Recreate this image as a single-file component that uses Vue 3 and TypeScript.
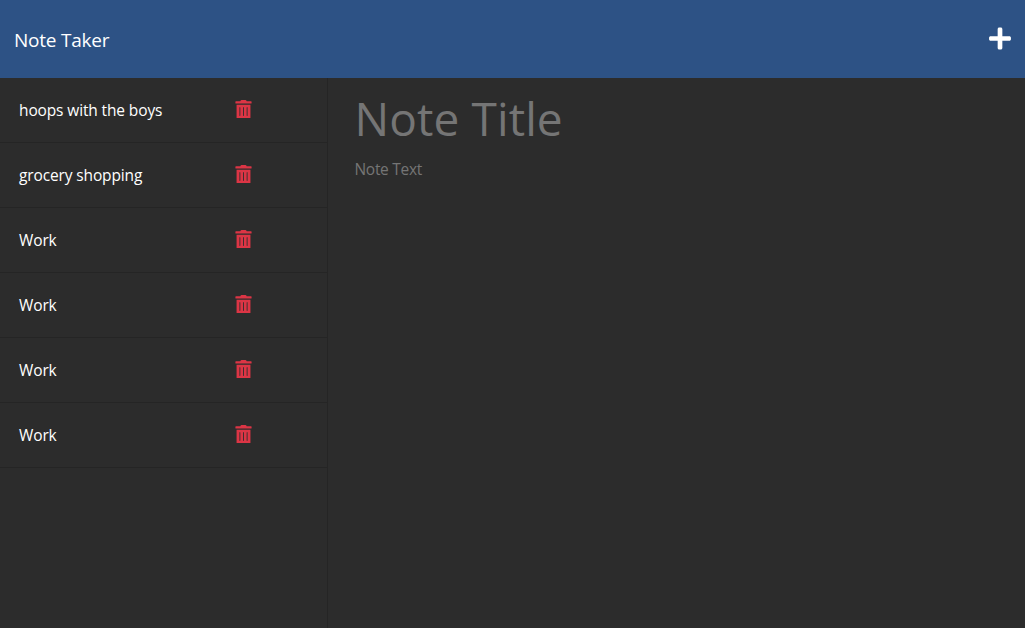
<script setup lang="ts">
import { ref } from 'vue'

interface Note {
  id: number
  title: string
}

const notes = ref<Note[]>([
  { id: 1, title: 'hoops with the boys' },
  { id: 2, title: 'grocery shopping' },
  { id: 3, title: 'Work' },
  { id: 4, title: 'Work' },
  { id: 5, title: 'Work' },
  { id: 6, title: 'Work' },
])
const noteTitle = ref('')
const noteText = ref('')

function removeNote(id: number) {
  notes.value = notes.value.filter((note) => note.id !== id)
}

function newNote() {
  noteTitle.value = ''
  noteText.value = ''
}
</script>

<template>
  <div class="app">
    <header class="navbar">
      <span class="brand">Note Taker</span>
      <button class="icon-button" aria-label="New note" @click="newNote">
        <svg class="plus" viewBox="0 0 448 512" fill="currentColor">
          <path d="M416 208H272V64c0-17.67-14.33-32-32-32h-32c-17.67 0-32 14.33-32 32v144H32c-17.67 0-32 14.33-32 32v32c0 17.67 14.33 32 32 32h144v144c0 17.67 14.33 32 32 32h32c17.67 0 32-14.33 32-32V304h144c17.67 0 32-14.33 32-32v-32c0-17.67-14.33-32-32-32z" />
        </svg>
      </button>
    </header>
    <main class="content">
      <ul class="notes">
        <li v-for="note in notes" :key="note.id" class="note">
          <span class="note-title">{{ note.title }}</span>
          <button class="icon-button" aria-label="Delete note" @click="removeNote(note.id)">
            <svg class="trash" viewBox="0 0 448 512" fill="currentColor">
              <path d="M32 492a20 20 0 0 0 20 20h344a20 20 0 0 0 20-20V128H32zm280-284a12 12 0 0 1 24 0v224a12 12 0 0 1-24 0zm-100 0a12 12 0 0 1 24 0v224a12 12 0 0 1-24 0zm-100 0a12 12 0 0 1 24 0v224a12 12 0 0 1-24 0zM432 32H312l-9.400-18.700A24 24 0 0 0 281.100 0H166.800a23.720 23.720 0 0 0-21.400 13.300L136 32H16A16 16 0 0 0 0 48v32a16 16 0 0 0 16 16h416a16 16 0 0 0 16-16V48a16 16 0 0 0-16-16z" />
            </svg>
          </button>
        </li>
      </ul>
      <section class="editor">
        <input v-model="noteTitle" class="title-input" placeholder="Note Title" />
        <textarea v-model="noteText" class="text-input" placeholder="Note Text"></textarea>
      </section>
    </main>
  </div>
</template>

<style>
body {
  margin: 0;
  background: #2c2c2c;
}
</style>

<style scoped>
.app {
  display: flex;
  flex-direction: column;
  height: 100vh;
  overflow: hidden;
  background: #2c2c2c;
  color: #fff;
  font-family: "Open Sans", "Noto Sans", sans-serif;
}
.navbar {
  box-sizing: border-box;
  flex: none;
  display: flex;
  align-items: center;
  justify-content: space-between;
  height: 78px;
  padding: 0 14px;
  background: #2d5285;
}
.brand {
  padding-top: 2px;
  font-size: 19px;
  letter-spacing: -0.22px;
}
.icon-button {
  display: flex;
  padding: 0;
  border: 0;
  background: none;
  color: inherit;
  cursor: pointer;
}
.plus {
  width: 22px;
  height: 25px;
  margin: 0 0.5px 2px 0;
}
.content {
  flex: 1;
  display: flex;
  min-height: 0;
}
.notes {
  box-sizing: border-box;
  width: 328px;
  margin: 0;
  padding: 0;
  list-style: none;
  border-right: 1px solid #252525;
}
.note {
  box-sizing: border-box;
  display: flex;
  align-items: center;
  height: 65px;
  padding-left: 19px;
  border-bottom: 1px solid #252525;
}
.note-title {
  width: 216px;
  font-size: 15.5px;
  letter-spacing: -0.13px;
}
.trash {
  width: 17px;
  height: 18.500px;
  margin-bottom: 2px;
  color: #dc3545;
}
.editor {
  flex: 1;
  display: flex;
  flex-direction: column;
  padding: 10px 27px 0 26.5px;
}
.title-input,
.text-input {
  box-sizing: border-box;
  width: 100%;
  padding: 0;
  border: 0;
  outline: 0;
  background: none;
  color: #fff;
  font-family: inherit;
}
.title-input {
  height: 60px;
  font-size: 46px;
  letter-spacing: 0.1px;
}
.text-input {
  flex: 1;
  margin-top: 9px;
  resize: none;
  font-size: 15.5px;
  line-height: 24px;
  letter-spacing: -0.3px;
}
.title-input::placeholder,
.text-input::placeholder {
  color: #757575;
}
</style>
